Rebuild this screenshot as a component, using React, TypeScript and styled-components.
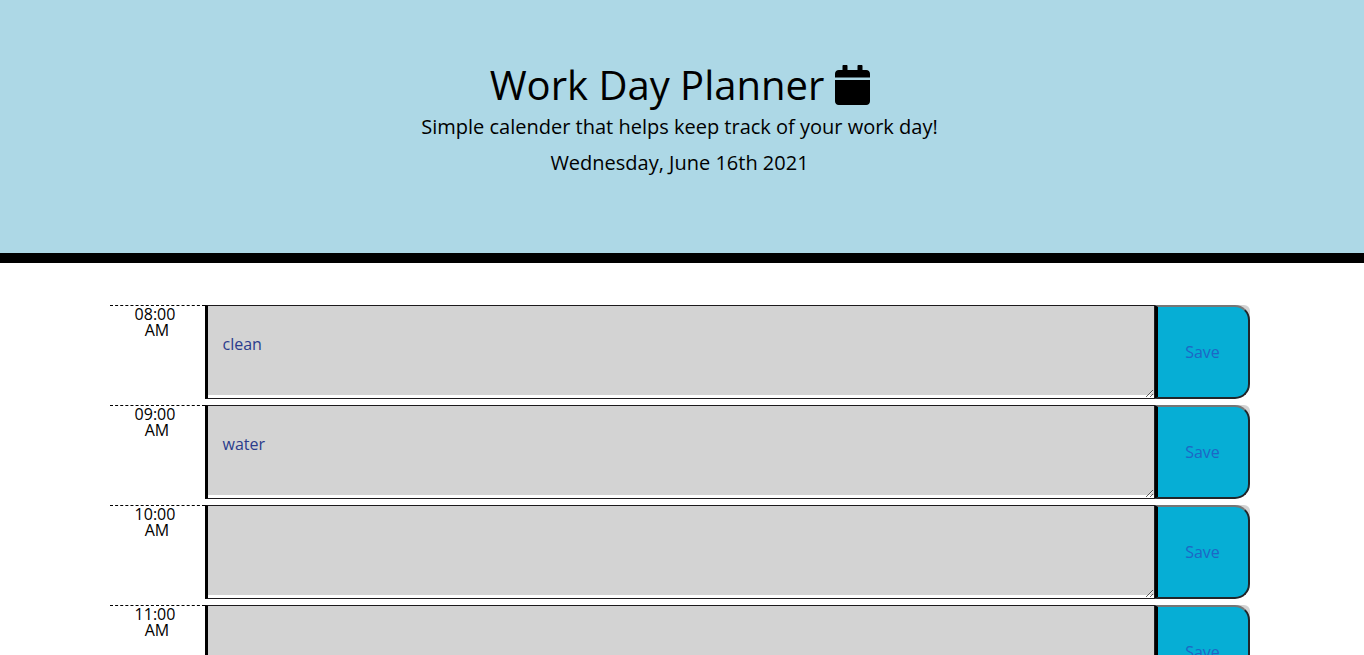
import React from "react";
import styled, { createGlobalStyle } from "styled-components";

const GlobalStyle = createGlobalStyle`
  *, *::before, *::after { box-sizing: border-box; }
  body {
    margin: 0;
    background: #fff;
    color: #000;
    font-family: "Open Sans", sans-serif;
    font-size: 16px;
    font-weight: 400;
  }
`;

const Page = styled.div`
  height: 100vh;
  overflow: hidden;
`;

const Header = styled.header`
  height: 263px;
  padding: 61px 5px 0 0;
  background: lightblue;
  border-bottom: 10px solid #000;
  text-align: center;
`;

const Title = styled.h1`
  display: flex;
  justify-content: center;
  align-items: center;
  gap: 11px;
  margin: 0 0 3px;
  padding-left: 1px;
  font-size: 40px;
  font-weight: 400;
  line-height: 48px;
`;

const CalendarIcon = styled.svg`
  display: block;
  width: 35px;
  height: 40px;
  fill: currentColor;
`;

const Lead = styled.p`
  margin: 0 0 6px;
  font-size: 20px;
  line-height: 30px;
`;

const Planner = styled.main`
  display: flex;
  flex-direction: column;
  gap: 6px;
  width: 1140px;
  margin: 42px 0 0 110px;
`;

const TimeBlock = styled.section`
  display: grid;
  grid-template-columns: 95px 950px 95px;
  height: 94px;
`;

const Hour = styled.div`
  padding: 0 20px 0 15px;
  border-top: 1px dashed #000;
  line-height: 16px;
  text-align: center;
  white-space: pre;
`;

const Meridiem = styled.span`
  display: block;
  padding-left: 4px;
`;

const Task = styled.textarea`
  display: block;
  width: 100%;
  height: 94px;
  margin: 0;
  padding: 26px 14px 0 14.5px;
  border: 1px solid #1c1a1c;
  border-left: 3px solid #000;
  border-radius: 0;
  outline: none;
  background: linear-gradient(lightgrey 89px, #fff 89px);
  color: #2b3c8c;
  font: inherit;
  line-height: 24px;
  overflow: auto;
`;

const SaveCell = styled.div`
  border-top-right-radius: 6px;
  background: linear-gradient(lightgrey, lightgrey) top right / 15px 15px no-repeat;
`;

const SaveButton = styled.button`
  display: block;
  width: 95px;
  height: 94px;
  padding: 0 1px 0 0;
  border-style: solid;
  border-width: 2px 2px 2px 3px;
  border-color: #767676 #212529 #212529 #000;
  border-radius: 0 15px 15px 0;
  background: #06aed5;
  color: #1e66c6;
  font: inherit;
`;

const blocks = [
  { time: "08:00", period: "AM", task: "clean" },
  { time: "09:00", period: "AM", task: "water" },
  { time: "10:00", period: "AM", task: "" },
  { time: "11:00", period: "AM", task: "" },
];

export default function App() {
  return (
    <Page>
      <GlobalStyle />
      <Header>
        <Title>
          Work Day Planner
          <CalendarIcon viewBox="0 0 448 512" aria-hidden="true">
            <path d="M0 464c0 26.500 21.500 48 48 48h352c26.500 0 48-21.500 48-48V192H0v272zM448 160v-48c0-26.500-21.500-48-48-48h-48V12c0-6.600-5.400-12-12-12h-40c-6.600 0-12 5.400-12 12v52H160V12c0-6.600-5.400-12-12-12h-40c-6.600 0-12 5.400-12 12v52H48C21.500 64 0 85.500 0 112v48h448z" />
          </CalendarIcon>
        </Title>
        <Lead>Simple calender that helps keep track of your work day!</Lead>
        <Lead>Wednesday, June 16th 2021</Lead>
      </Header>
      <Planner>
        {blocks.map(({ time, period, task }) => (
          <TimeBlock key={time}>
            <Hour>
              {time}
              <Meridiem>{period}</Meridiem>
            </Hour>
            <Task defaultValue={task} spellCheck={false} aria-label={`${time} ${period}`} />
            <SaveCell>
              <SaveButton type="button">Save</SaveButton>
            </SaveCell>
          </TimeBlock>
        ))}
      </Planner>
    </Page>
  );
}
